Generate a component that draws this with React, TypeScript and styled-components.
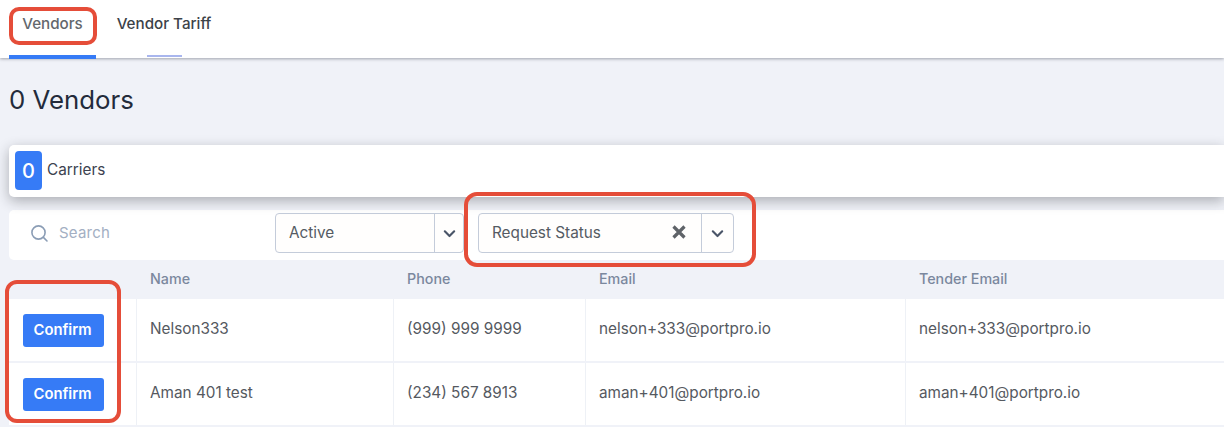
import React from "react";
import styled, { createGlobalStyle } from "styled-components";

const Global = createGlobalStyle`
  html, body { margin: 0; padding: 0; background: #f0f2f8; overflow: hidden; }
  body { font-family: Inter, "Liberation Sans", sans-serif; }
  #root { width: 1224px; height: 427px; overflow: hidden; }
`;

const Page = styled.div`
  position: relative;
  width: 1224px;
  height: 427px;
  overflow: hidden;
  background: #f0f2f8;
`;

const TabBar = styled.nav`
  display: flex;
  height: 58px;
  padding-left: 9px;
  background: #fff;
  box-shadow: 0 1px 3px rgba(60, 65, 80, 0.45);
  position: relative;
  z-index: 2;
`;

const Tab = styled.div<{ $active?: boolean; $width: number }>`
  position: relative;
  box-sizing: border-box;
  width: ${(p) => p.$width}px;
  height: 59px;
  padding-top: 15px;
  text-align: center;
  font-size: 15.2px;
  line-height: 18px;
  font-weight: 500;
  color: ${(p) => (p.$active ? "#63676c" : "#3c4248")};
  border-bottom: 4px solid ${(p) => (p.$active ? "#367bf6" : "transparent")};
`;

const HoverMark = styled.span`
  position: absolute;
  left: 51px;
  right: 50px;
  bottom: -2px;
  height: 2px;
  background: #a9b6ee;
`;

const Title = styled.h1`
  margin: 0;
  padding: 27px 0 0 9px;
  height: 60px;
  font-size: 25.8px;
  line-height: 30px;
  font-weight: 400;
  color: #232b3b;
`;

const SummaryCard = styled.section`
  display: flex;
  align-items: center;
  gap: 5px;
  box-sizing: border-box;
  height: 52px;
  margin-left: 9px;
  padding-left: 6px;
  background: #fff;
  border-radius: 5px 0 0 5px;
  box-shadow: 0 4px 13px rgba(30, 32, 40, 0.33);
  position: relative;
  z-index: 1;
`;

const Count = styled.span`
  display: flex;
  align-items: center;
  justify-content: center;
  width: 27px;
  height: 39px;
  margin-bottom: 1px;
  border-radius: 4px;
  background: #367bf6;
  color: #fff;
  font-size: 20px;
  font-weight: 500;
`;

const CountLabel = styled.span`
  padding-bottom: 3px;
  font-size: 15.3px;
  color: #3c4250;
`;

const Toolbar = styled.div`
  display: flex;
  align-items: flex-start;
  box-sizing: border-box;
  height: 50px;
  margin: 13px 0 0 9px;
  padding: 3px 0 0 21px;
  background: #fff;
  border-radius: 5px 0 0 5px;
`;

const SearchBox = styled.div`
  display: flex;
  align-items: center;
  gap: 10px;
  width: 245px;
  height: 40px;
  font-size: 15px;
  color: #a3afc3;
  letter-spacing: 0.2px;
`;

const SearchText = styled.span`
  padding-bottom: 2px;
`;

const Select = styled.div<{ $width: number; $left?: number }>`
  display: flex;
  align-items: stretch;
  box-sizing: border-box;
  width: ${(p) => p.$width}px;
  height: 40px;
  margin-left: ${(p) => p.$left ?? 0}px;
  border: 1px solid #c4ccda;
  border-radius: 4px;
  background: #fffefd;
  font-size: 15.3px;
  color: #555b63;
`;

const SelectValue = styled.div`
  flex: 1;
  display: flex;
  align-items: center;
  justify-content: space-between;
  padding: 0 15px 2px 13px;
`;

const SelectArrow = styled.div<{ $width: number }>`
  display: flex;
  align-items: center;
  justify-content: center;
  width: ${(p) => p.$width}px;
  border-left: 1px solid #c4ccda;
  color: #4a5568;
`;

const cols = "128px 257px 192px 320px 1fr";

const HeadRow = styled.div`
  display: grid;
  grid-template-columns: ${cols};
  height: 39px;
  padding-bottom: 2px;
  box-sizing: border-box;
  margin-left: 9px;
  align-items: center;
  font-size: 14.3px;
  font-weight: 500;
  color: #7b889e;
`;

const HeadCell = styled.div`
  padding-left: 13px;
`;

const Row = styled.div`
  display: grid;
  grid-template-columns: ${cols};
  height: 62px;
  margin: 0 0 2px 9px;
  background: #fff;
  font-size: 15.3px;
  color: #55595f;
`;

const Cell = styled.div<{ $first?: boolean }>`
  display: flex;
  align-items: center;
  padding-left: ${(p) => (p.$first ? 14 : 13)}px;
  padding-bottom: ${(p) => (p.$first ? 0 : 3)}px;
  border-right: 1px solid #eef1f6;
  &:last-child { border-right: 0; }
`;

const ConfirmButton = styled.button`
  width: 81px;
  height: 33px;
  border: 0;
  border-radius: 3px;
  background: #367bf6;
  color: #fff;
  font-family: inherit;
  font-size: 14.8px;
  font-weight: 600;
  padding: 0 2px 0 0;
`;

const Callout = styled.div<{ $x: number; $y: number; $w: number; $h: number; $r: number }>`
  position: absolute;
  box-sizing: border-box;
  left: ${(p) => p.$x}px;
  top: ${(p) => p.$y}px;
  width: ${(p) => p.$w}px;
  height: ${(p) => p.$h}px;
  border: 4px solid #e54d39;
  border-radius: ${(p) => p.$r}px;
  z-index: 5;
`;

const Chevron = () => (
  <svg width="15" height="15" viewBox="0 0 24 24" fill="none" stroke="currentColor" strokeWidth="3.4" strokeLinecap="round" strokeLinejoin="round">
    <path d="M4.5 8.5l7.5 7.5 7.5-7.5" />
  </svg>
);

const rows = [
  { name: "Nelson333", phone: "(999) 999 9999", email: "nelson+333@portpro.io" },
  { name: "Aman 401 test", phone: "(234) 567 8913", email: "aman+401@portpro.io" },
];

export default function App() {
  return (
    <Page>
      <Global />
      <TabBar>
        <Tab $active $width={87}>Vendors</Tab>
        <Tab $width={136}>Vendor Tariff<HoverMark /></Tab>
      </TabBar>
      <Title>0 Vendors</Title>
      <SummaryCard>
        <Count>0</Count>
        <CountLabel>Carriers</CountLabel>
      </SummaryCard>
      <Toolbar>
        <SearchBox>
          <svg width="19" height="19" viewBox="0 0 19 19" fill="none" stroke="#8b9db5" strokeWidth="1.6" strokeLinecap="round">
            <circle cx="8.5" cy="8.5" r="6.6" />
            <path d="M13.4 13.4l3.6 3.6" />
          </svg>
          <SearchText>Search</SearchText>
        </SearchBox>
        <Select $width={189}>
          <SelectValue>Active</SelectValue>
          <SelectArrow $width={28}><Chevron /></SelectArrow>
        </Select>
        <Select $width={256} $left={14}>
          <SelectValue>
            Request Status
            <svg width="14" height="14" viewBox="0 0 14 14" fill="none" stroke="#5f6368" strokeWidth="3.2">
              <path d="M1.5 1.5l11 11M12.5 1.5l-11 11" />
            </svg>
          </SelectValue>
          <SelectArrow $width={31}><Chevron /></SelectArrow>
        </Select>
      </Toolbar>
      <div>
        <HeadRow>
          <HeadCell />
          <HeadCell>Name</HeadCell>
          <HeadCell>Phone</HeadCell>
          <HeadCell>Email</HeadCell>
          <HeadCell>Tender Email</HeadCell>
        </HeadRow>
        {rows.map((r) => (
          <Row key={r.name}>
            <Cell $first><ConfirmButton>Confirm</ConfirmButton></Cell>
            <Cell>{r.name}</Cell>
            <Cell>{r.phone}</Cell>
            <Cell>{r.email}</Cell>
            <Cell>{r.email}</Cell>
          </Row>
        ))}
      </div>
      <Callout $x={9} $y={7} $w={88} $h={38} $r={10} />
      <Callout $x={464} $y={192} $w={292} $h={75} $r={13} />
      <Callout $x={5} $y={280} $w={116} $h={143} $r={12} />
    </Page>
  );
}
